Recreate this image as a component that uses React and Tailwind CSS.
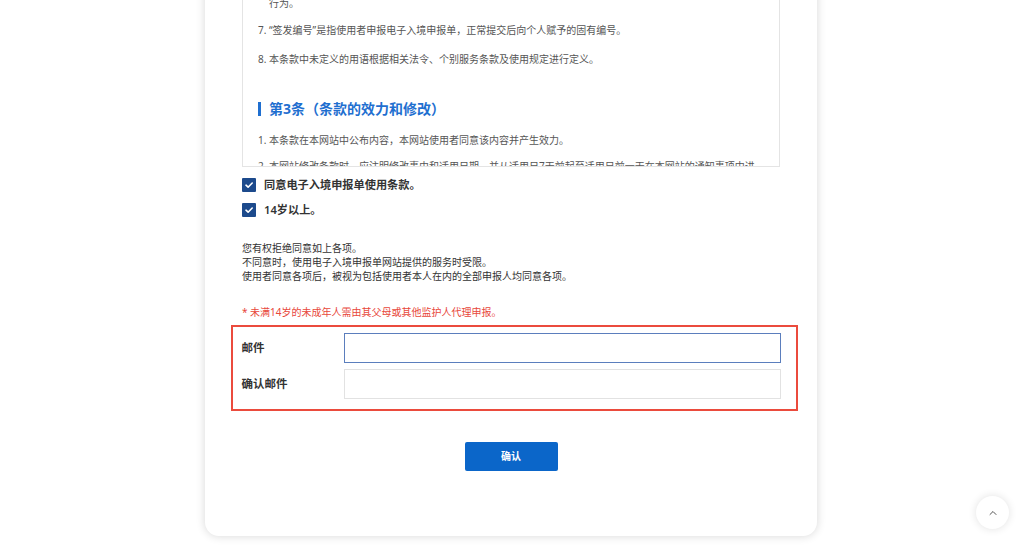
import React from "react";
import { ChevronUp } from "lucide-react";

const font = { fontFamily: '"Noto Sans", "Noto Sans CJK SC", sans-serif' };

const CheckRow = ({ label }) => (
  <label className="flex h-[14px] items-center gap-[8px]">
    <span className="flex h-[14px] w-[14px] items-center justify-center rounded-[1px] bg-[#1c4a8c]">
      <svg width="10" height="10" viewBox="0 0 10 10" fill="none">
        <path d="M2 5.2 4.1 7.2 8.2 3" stroke="white" strokeWidth="1.6" strokeLinecap="round" strokeLinejoin="round" />
      </svg>
    </span>
    <span className="text-[11.2px] font-semibold text-[#333]">{label}</span>
  </label>
);

const FieldRow = ({ label, focused }) => (
  <div className="flex items-center">
    <span className="w-[102px] text-[11.5px] font-bold text-[#333]">{label}</span>
    <input
      type="email"
      className={
        focused
          ? "h-[30px] w-[437px] border border-[#5b7ebd] bg-white px-2 outline-none"
          : "h-[30px] w-[437px] border border-[#e2e2e2] bg-white px-2 outline-none"
      }
    />
  </div>
);

export default function App() {
  return (
    <div className="relative h-[547px] w-[1024px] overflow-hidden bg-white" style={font}>
      {/* Card */}
      <div className="ml-[205px] -mt-[40px] w-[612px] rounded-b-[14px] bg-white px-[37px] pt-[10px] pb-[65px] shadow-[0_0_10px_rgba(0,0,0,0.16)]">
        {/* Terms scroll box */}
        <div className="h-[197px] overflow-hidden border border-[#e4e4e4] pl-[15px] pr-3">
          <div className="pt-[25px] text-[10px] leading-[14px] text-[#555]">
            <p className="pl-[11px]">行为。</p>
            <p className="mt-[13px]">7. “签发编号”是指使用者申报电子入境申报单，正常提交后向个人赋予的固有编号。</p>
            <p className="mt-[15px]">8. 本条款中未定义的用语根据相关法令、个别服务条款及使用规定进行定义。</p>
            <h3 className="mt-[33px] flex items-center gap-[8px] text-[14px] leading-[20px] font-bold text-[#1f6fd0]">
              <span className="h-[14px] w-[3px] bg-[#1f6fd0]" />
              第3条（条款的效力和修改）
            </h3>
            <p className="mt-[14px]">1. 本条款在本网站中公布内容，本网站使用者同意该内容并产生效力。</p>
            <p className="mt-[12px] whitespace-nowrap">2. 本网站修改条款时，应注明修改事由和适用日期，并从适用日7天前起至适用日前一天在本网站的通知事项中进</p>
          </div>
        </div>

        {/* Agreements */}
        <div className="mt-[11px] flex flex-col gap-[11px]">
          <CheckRow label="同意电子入境申报单使用条款。" />
          <CheckRow label="14岁以上。" />
        </div>

        <div className="mt-[24px] text-[10px] leading-[14px] text-[#333]">
          <p>您有权拒绝同意如上各项。</p>
          <p>不同意时，使用电子入境申报单网站提供的服务时受限。</p>
          <p>使用者同意各项后，被视为包括使用者本人在内的全部申报人均同意各项。</p>
        </div>

        <p className="mt-[22px] text-[10px] leading-[14px] text-[#e8473b]">* 未满14岁的未成年人需由其父母或其他监护人代理申报。</p>

        {/* Email fields (highlighted) */}
        <div className="-ml-[11px] -mr-[18px] mt-[6px] flex flex-col gap-[6px] border-[2.5px] border-[#eb4b3d] pt-[6px] pr-[15px] pb-[10px] pl-[8.5px]">
          <FieldRow label="邮件" focused />
          <FieldRow label="确认邮件" />
        </div>

        <div className="mt-[31px] flex justify-center">
          <button className="h-[29px] w-[93px] rounded-[2px] bg-[#0b66c9] text-[10px] font-bold text-white">确认</button>
        </div>
      </div>

      {/* Back to top */}
      <button className="absolute top-[496px] left-[976px] flex h-[33px] w-[33px] items-center justify-center rounded-full bg-white shadow-[0_0_8px_rgba(0,0,0,0.12)]">
        <ChevronUp size={12} strokeWidth={2} className="text-[#555]" />
      </button>
    </div>
  );
}
